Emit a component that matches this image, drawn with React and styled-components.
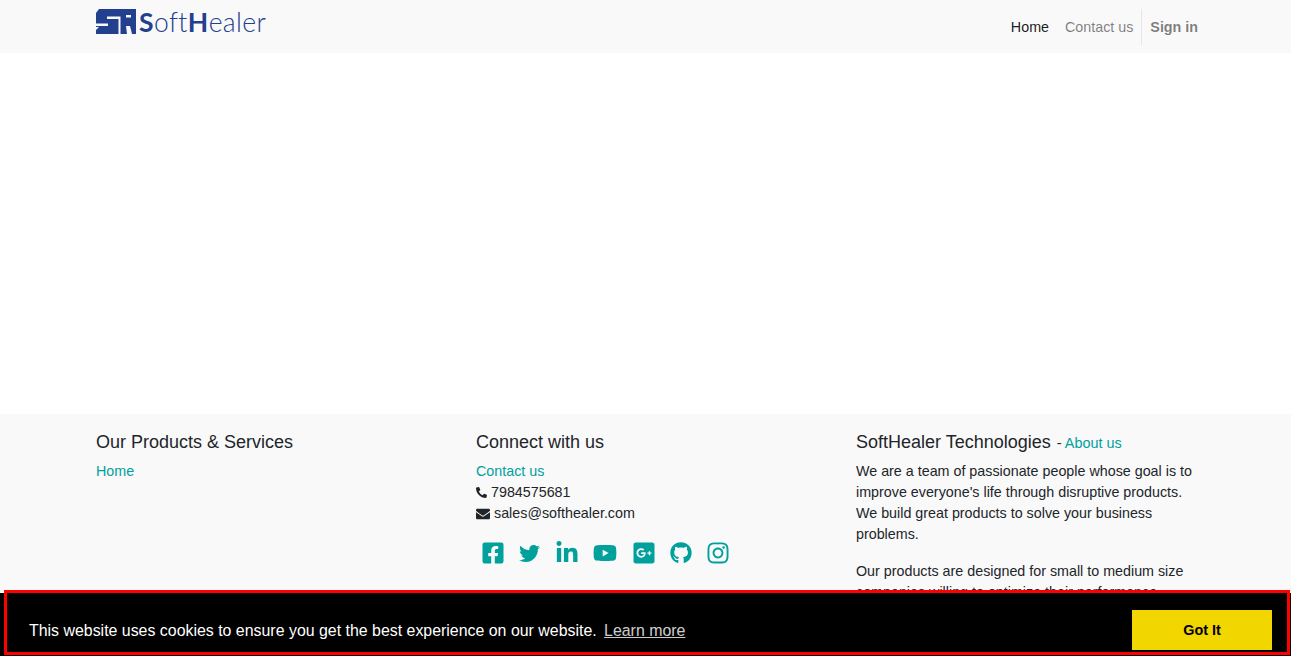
import React from "react";
import styled, { createGlobalStyle } from "styled-components";
import { FaPhoneAlt, FaEnvelope, FaFacebookSquare, FaTwitter, FaLinkedinIn, FaYoutube, FaGooglePlusSquare, FaGithub, FaInstagram } from "react-icons/fa";

const Global = createGlobalStyle`
  html, body { margin: 0; padding: 0; height: 656px; overflow: hidden; background: #fff; }
  body { font-family: "Liberation Sans", Arial, sans-serif; font-size: 14.3px; line-height: 21px; color: #212529; }
  * { box-sizing: border-box; }
`;

const Page = styled.div`
  display: flex;
  flex-direction: column;
`;
const Header = styled.header`
  height: 53px;
  background: #f9f9f9;
`;
const HeaderInner = styled.div`
  width: 1110px;
  margin-left: 96px;
  height: 100%;
  display: flex;
  justify-content: space-between;
`;
const Logo = styled.a`
  display: flex;
  align-items: flex-start;
  padding-top: 9px;
  gap: 3px;
  height: 100%;
  svg { display: block; }
`;
const LogoWord = styled.span`
  font-family: Lato, sans-serif;
  font-size: 26.5px;
  font-weight: 300;
  line-height: 26px;
  letter-spacing: 0.4px;
  color: #23408e;
  b { font-weight: 700; }
`;
const Nav = styled.nav`
  display: flex;
  align-items: center;
  height: 36px;
  margin-top: 9px;
  padding-right: 8px;
`;
const NavLink = styled.a`
  padding: 0 8px;
  color: ${(p) => (p.$active ? "rgba(0,0,0,0.9)" : "rgba(0,0,0,0.5)")};
`;
const SignIn = styled.a`
  height: 36px;
  display: flex;
  align-items: center;
  padding: 0 0 0 8px;
  border-left: 1px solid #e6e6e6;
  font-weight: 700;
  color: rgba(0,0,0,0.5);
`;
const Spacer = styled.main`
  height: 361px;
`;
const Footer = styled.footer`
  background: #f9f9f9;
  padding-top: 18px;
`;
const FooterGrid = styled.div`
  margin-left: 96px;
  display: grid;
  grid-template-columns: repeat(3, 350px);
  column-gap: 30px;
`;
const Column = styled.section``;
const Heading = styled.h5`
  margin: 0 0 8px;
  font-size: 18px;
  line-height: 21px;
  font-weight: 400;
  small { font-size: 14.4px; line-height: 1; margin-left: 1px; }
`;
const Link = styled.a`
  color: #00a09d;
`;
const Line = styled.div`
  display: flex;
  align-items: center;
  gap: 4px;
`;
const Socials = styled.div`
  display: flex;
  align-items: center;
  margin-top: 15px;
  padding-left: 6px;
  gap: 16px;
  color: #00a09d;
  height: 28px;
`;
const Social = styled.a`
  display: flex;
  justify-content: center;
  width: ${(p) => p.$w}px;
  svg { flex: none; }
`;
const Para = styled.p`
  margin: 0 0 16px;
`;
const Banner = styled.div`
  position: fixed;
  left: 0;
  right: 0;
  bottom: 0;
  height: 63px;
  background: #000;
  color: #fff;
  display: flex;
  align-items: flex-end;
  justify-content: space-between;
  padding: 0 19px 6px 29px;
  font-size: 15.92px;
  line-height: 24px;
`;
const BannerText = styled.span`
  padding-bottom: 7px;
`;
const LearnMore = styled.a`
  color: #fff;
  opacity: 0.8;
  text-decoration: underline;
  margin-left: 3px;
`;
const GotIt = styled.button`
  width: 140px;
  height: 40px;
  border: 0;
  padding: 0;
  background: #f1d600;
  color: #000;
  font-family: inherit;
  font-weight: 700;
  font-size: 14.4px;
`;
const Highlight = styled.div`
  position: fixed;
  left: 4px;
  top: 590px;
  width: 1286px;
  height: 65px;
  border: 3px solid #ff0000;
  pointer-events: none;
`;

const LogoMark = () => (
  <svg width="40" height="25" viewBox="0 0 40 25">
    <path fill="#23408e" d="M3 0H40V25H0V21L3 18H0V4Z" />
    <path fill="#f9f9f9" d="M11 7.5H24.5V25H22.5V10H11ZM0 14.5H12V17H0ZM30 6H35V8.5H30ZM30 17H34L36 25H31Z" />
  </svg>
);

export default function App() {
  return (
    <Page>
      <Global />
      <Header>
        <HeaderInner>
          <Logo>
            <LogoMark />
            <LogoWord><b>S</b>oft<b>H</b>ealer</LogoWord>
          </Logo>
          <Nav>
            <NavLink $active>Home</NavLink>
            <NavLink>Contact us</NavLink>
            <SignIn>Sign in</SignIn>
          </Nav>
        </HeaderInner>
      </Header>
      <Spacer />
      <Footer>
        <FooterGrid>
          <Column>
            <Heading>Our Products &amp; Services</Heading>
            <Link>Home</Link>
          </Column>
          <Column>
            <Heading>Connect with us</Heading>
            <div><Link>Contact us</Link></div>
            <Line><FaPhoneAlt size={11} />7984575681</Line>
            <Line><FaEnvelope size={14} />sales@softhealer.com</Line>
            <Socials>
              <Social $w={21}><FaFacebookSquare size={24} /></Social>
              <Social $w={21}><FaTwitter size={21} /></Social>
              <Social $w={21}><FaLinkedinIn size={24} /></Social>
              <Social $w={24}><FaYoutube size={24} /></Social>
              <Social $w={21}><FaGooglePlusSquare size={24} /></Social>
              <Social $w={21}><FaGithub size={22} /></Social>
              <Social $w={21}><FaInstagram size={24} /></Social>
            </Socials>
          </Column>
          <Column>
            <Heading>SoftHealer Technologies <small>- <Link>About us</Link></small></Heading>
            <Para>We are a team of passionate people whose goal is to improve everyone's life through disruptive products. We build great products to solve your business problems.</Para>
            <Para>Our products are designed for small to medium size companies willing to optimize their performance.</Para>
          </Column>
        </FooterGrid>
      </Footer>
      <Banner>
        <BannerText>This website uses cookies to ensure you get the best experience on our website. <LearnMore>Learn more</LearnMore></BannerText>
        <GotIt>Got It</GotIt>
      </Banner>
      <Highlight />
    </Page>
  );
}
